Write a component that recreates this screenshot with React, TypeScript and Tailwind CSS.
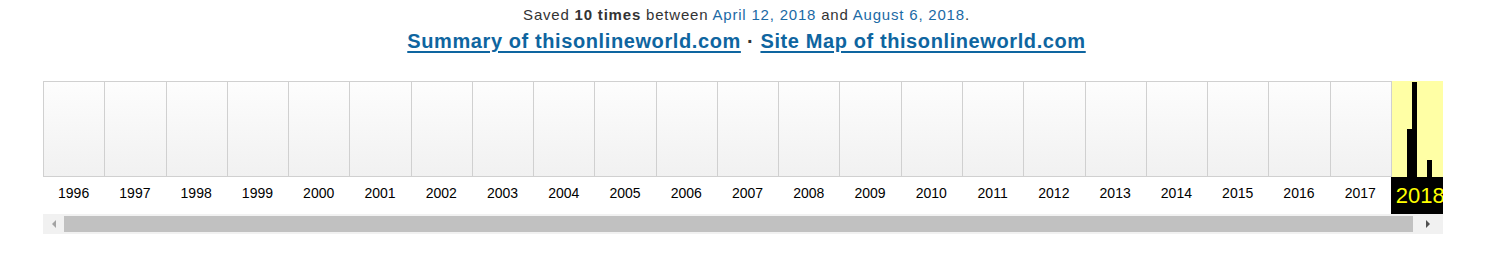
const years = [
  1996, 1997, 1998, 1999, 2000, 2001, 2002, 2003, 2004, 2005, 2006,
  2007, 2008, 2009, 2010, 2011, 2012, 2013, 2014, 2015, 2016, 2017,
];

const App = () => {
  return (
    <div className="w-[1493px] h-[278px] bg-white font-['Liberation_Sans',Arial,sans-serif] overflow-hidden">
      <div className="pt-[5px] text-center text-[15px] leading-[20px] tracking-[0.8px] text-[#333]">
        Saved <b>10 times</b> between{" "}
        <a className="text-[#1b6aa5]">April 12, 2018</a> and{" "}
        <a className="text-[#1b6aa5]">August 6, 2018</a>.
      </div>
      <div className="mt-[3px] text-center text-[20px] leading-[26px] tracking-[0.6px] font-bold text-[#333]">
        <a className="text-[#0e65a0] underline underline-offset-[3px]">Summary of thisonlineworld.com</a>
        {" · "}
        <a className="text-[#0e65a0] underline underline-offset-[3px]">Site Map of thisonlineworld.com</a>
      </div>

      <div className="ml-[43px] mt-[27px] w-[1400px] overflow-hidden">
        <div className="flex w-[1500px]">
          {years.map((y) => (
            <div key={y} className="w-[61.27px] shrink-0 flex flex-col">
              <div className="h-[96px] border-t border-b border-l border-[#d0d0d0] bg-gradient-to-b from-[#fdfdfd] to-[#f1f1f1]" />
              <div className="h-[37px] pb-[4px] flex items-center justify-center text-[14px] text-black">{y}</div>
            </div>
          ))}
          <div className="w-[62px] shrink-0 flex flex-col">
            <div className="h-[96px] bg-[#ffffa5] border-l border-[#d0d0d0] flex items-end">
              <div className="ml-[15px] w-[5px] h-[48px] bg-black" />
              <div className="w-[5px] h-[95px] bg-black" />
              <div className="ml-[10px] w-[5px] h-[17px] bg-black" />
            </div>
            <div className="h-[37px] bg-black flex items-center pl-[5px] text-[22px] text-[#ffff00]">2018</div>
          </div>
        </div>
        <div className="h-[20px] bg-[#f1f1f1] flex items-center">
          <div className="w-[21px] h-full flex items-center justify-center">
            <div className="w-0 h-0 border-y-[4px] border-y-transparent border-r-[4px] border-r-[#a3a3a3]" />
          </div>
          <div className="w-[1349px] h-[16px] bg-[#c1c1c1]" />
          <div className="flex-1 h-full flex items-center justify-center">
            <div className="w-0 h-0 border-y-[4px] border-y-transparent border-l-[4px] border-l-[#505050]" />
          </div>
        </div>
      </div>
    </div>
  );
};

export default App;
